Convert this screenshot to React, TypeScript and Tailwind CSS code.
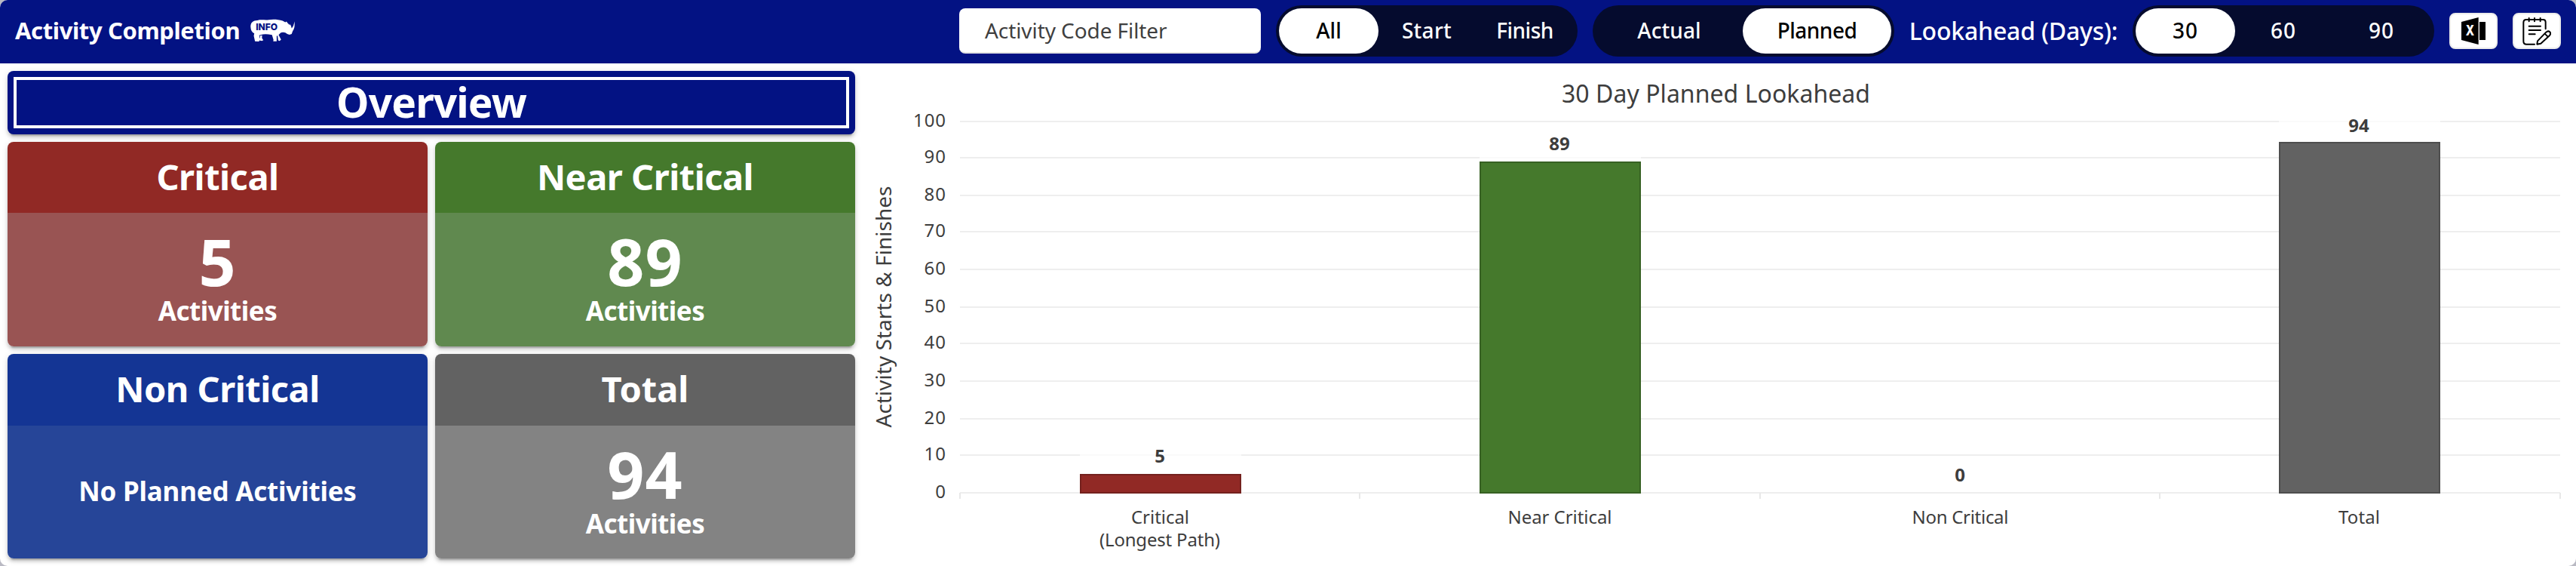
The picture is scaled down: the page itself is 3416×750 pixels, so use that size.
import type { ReactNode } from "react";

const SHADOW =
  "shadow-[0_6px_2px_-4px_rgba(0,0,0,0.2),0_4px_4px_0_rgba(0,0,0,0.14),0_2px_10px_0_rgba(0,0,0,0.12)]";

function RhinoInfo() {
  return (
    <svg viewBox="60 47 183 95" className="ml-[13px] h-[31px] w-[61px] shrink-0">
      <path
        fill="#fff"
        d="M62 79 C62 62 72 53 90 53 C104 49 120 53 136 51 C152 48 174 49 192 55 L203 61 L208 58 L213 65 L222 73 L221 67 Q228 75 229 85 Q238 76 240 57 Q244 82 233 97 L229 108 L220 111 L211 108 L203 103 Q192 100 184 104 L176 112 L186 131 L180 137 L174 134 L172 116 L168 116 L168 138 L154 138 L155 132 L149 112 Q124 107 112 110 L97 114 L99 124 L112 133 L108 137 L98 134 L96 139 L80 138 L75 116 L77 106 Q63 100 62 79 Z"
      />
      <path fill="#fff" d="M100 116 L109 114 L108 124 L114 134 L102 134 Z" />
      <text
        x="83"
        y="94"
        fontFamily="Inter, sans-serif"
        fontSize="38"
        fontWeight="800"
        fill="#031283"
        textLength="89"
        lengthAdjust="spacingAndGlyphs"
      >
        INFO
      </text>
    </svg>
  );
}

function ExcelIcon() {
  return (
    <svg viewBox="102 54 96 108" className="h-9 w-8">
      <path d="M102 72 L170 54 V162 L102 144 Z" fill="#000" />
      <path d="M174 72 H198 V144 H174 Z" fill="#000" />
      <text
        x="119"
        y="125"
        fontFamily="Inter, sans-serif"
        fontSize="56"
        fontWeight="800"
        fill="#fff"
        textLength="34"
        lengthAdjust="spacingAndGlyphs"
      >
        X
      </text>
    </svg>
  );
}

function NotesIcon() {
  return (
    <svg
      viewBox="354 53 114 111"
      className="h-[37px] w-[38px]"
      fill="none"
      stroke="#000"
      strokeWidth="6"
      strokeLinecap="round"
      strokeLinejoin="round"
    >
      <path d="M446 99 V72 Q446 62 436 62 H369 Q358 62 358 74 V148 Q358 160 370 160 H402" />
      <path d="M380 56 V69 M402 56 V69 M425 56 V69" />
      <path d="M380 88 H426 M380 104 H426 M380 120 H404" />
      <path d="M412 160 L414 147 L448 112 Q456 105 463 111 Q468 117 462 125 L427 157 Z M443 118 L455 130" />
    </svg>
  );
}

function Segment({ children, active, className }: { children: ReactNode; active?: boolean; className: string }) {
  return (
    <div
      className={`flex h-[60px] items-center justify-center rounded-[30px] pb-0.5 text-[28px] font-medium ${
        active ? "bg-white text-black" : "text-white"
      } ${className}`}
    >
      {children}
    </div>
  );
}

function SegmentGroup({ children }: { children: ReactNode }) {
  return <div className="flex h-[68px] w-[400px] rounded-[34px] bg-[#050b2e] p-1">{children}</div>;
}

function IconButton({ children }: { children: ReactNode }) {
  return (
    <button className="flex h-12 w-16 items-center justify-center rounded-lg border-2 border-[#ebebeb] bg-white">
      {children}
    </button>
  );
}

function Header() {
  return (
    <header className="flex h-[84px] items-start justify-between bg-[#031283] pr-5 pl-5">
      <div className="flex h-[81px] items-center">
        <h1 className="w-[298px] text-[31px] font-bold tracking-[-0.38px] whitespace-nowrap text-white">
          Activity Completion
        </h1>
        <RhinoInfo />
      </div>
      <div className="flex h-[82px] items-center">
        <div className="mr-5 flex h-[60px] w-[400px] items-center rounded-lg border-b-2 border-[#e4e4e4] bg-white pl-[34px] text-[28px] tracking-[-0.08px] text-[#3f3f3f]">
          Activity Code Filter
        </div>
        <SegmentGroup>
          <Segment active className="w-[132px]">All</Segment>
          <Segment className="w-32 tracking-[0.3px]">Start</Segment>
          <Segment className="w-[132px] tracking-[-0.5px]">Finish</Segment>
        </SegmentGroup>
        <div className="w-5" />
        <SegmentGroup>
          <Segment className="w-[195px] tracking-[0.1px]">Actual</Segment>
          <Segment active className="w-[197px] tracking-[-0.5px]">Planned</Segment>
        </SegmentGroup>
        <div className="w-[316px] text-center text-[32px] font-medium tracking-[-0.2px] text-white">
          Lookahead (Days):
        </div>
        <SegmentGroup>
          <Segment active className="w-[132px] tracking-[1px]">30</Segment>
          <Segment className="w-32 tracking-[1px]">60</Segment>
          <Segment className="w-[132px] tracking-[1px]">90</Segment>
        </SegmentGroup>
        <div className="ml-5 flex gap-5">
          <IconButton>
            <ExcelIcon />
          </IconButton>
          <IconButton>
            <NotesIcon />
          </IconButton>
        </div>
      </div>
    </header>
  );
}

interface CardProps {
  title: string;
  titleClass: string;
  bodyClass: string;
  value?: string;
}

function Card({ title, titleClass, bodyClass, value }: CardProps) {
  return (
    <section className={`flex h-[271px] flex-col overflow-hidden rounded-lg text-white ${SHADOW}`}>
      <h3 className={`flex shrink-0 items-center justify-center pb-0.5 text-[47px] font-bold ${titleClass}`}>
        {title}
      </h3>
      {value ? (
        <div className={`flex-1 pt-[21px] text-center font-bold ${bodyClass}`}>
          <div className="text-[86px] leading-[86px] tracking-[1px]">{value}</div>
          <div className="text-[35px] leading-[45px] tracking-[-0.5px]">Activities</div>
        </div>
      ) : (
        <div
          className={`flex flex-1 items-center justify-center pb-0.5 text-[35px] font-bold tracking-[-0.2px] ${bodyClass}`}
        >
          No Planned Activities
        </div>
      )}
    </section>
  );
}

function Overview() {
  return (
    <div className="w-[1124px]">
      <div className={`h-[84px] rounded-lg bg-[#031283] p-2 ${SHADOW}`}>
        <h2 className="flex h-[68px] items-center justify-center border-4 border-white pb-0.5 text-[55px] font-bold tracking-[-0.9px] text-white">
          Overview
        </h2>
      </div>
      <div className="mt-2.5 grid grid-cols-2 gap-2.5">
        <Card title="Critical" value="5" titleClass="h-[94px] bg-[#912925] tracking-[-0.5px]" bodyClass="bg-[#995453]" />
        <Card title="Near Critical" value="89" titleClass="h-[94px] bg-[#45792c] tracking-[-0.5px]" bodyClass="bg-[#60894f]" />
        <Card title="Non Critical" titleClass="h-[95px] bg-[#143594] tracking-[-0.5px]" bodyClass="bg-[#264598]" />
        <Card title="Total" value="94" titleClass="h-[95px] bg-[#626262]" bodyClass="bg-[#838383]" />
      </div>
    </div>
  );
}

const TICKS: [number, number][] = [
  [100, 161], [90, 209], [80, 259], [70, 307], [60, 357], [50, 407],
  [40, 455], [30, 505], [20, 555], [10, 603], [0, 653],
];

const BARS = [
  { x: 1539, top: 628, fill: "#912925", stroke: "#74211e", value: "5", labelY: 612.5, label: "Critical", width: 76 },
  { x: 2069, top: 214, fill: "#45792c", stroke: "#376123", value: "89", labelY: 198.5, label: "Near Critical", width: 137 },
  { x: 2600, top: 653, fill: "none", stroke: "none", value: "0", labelY: 637.5, label: "Non Critical", width: 127 },
  { x: 3129, top: 188, fill: "#626262", stroke: "#4e4e4e", value: "94", labelY: 174.5, label: "Total", width: 54 },
];

function Chart() {
  return (
    <svg
      viewBox="1144 84 2272 666"
      className="h-[666px] w-[2272px]"
      fontFamily="'Noto Sans', sans-serif"
      fill="#3d3d3d"
    >
      <text x="2071" y="135.5" fontSize="32" textLength="409">30 Day Planned Lookahead</text>
      <text transform="translate(1182 566.5) rotate(-90)" fontSize="28" textLength="320">
        Activity Starts &amp; Finishes
      </text>
      {TICKS.map(([value, y]) => (
        <g key={value}>
          <rect x="1273" y={y - 1} width="2122" height="2" fill="#eeeeee" />
          <text
            x="1254"
            y={y + 7}
            fontSize="24"
            textAnchor="end"
            textLength={value === 100 ? 43 : value === 0 ? 14 : 28.5}
          >
            {value}
          </text>
        </g>
      ))}
      {[1273, 1803, 2334, 2864, 3395].map((x) => (
        <rect key={x} x={x - 1} y="653" width="2" height="8" fill="#e8e8e8" />
      ))}
      {BARS.map((b) => (
        <g key={b.label}>
          {b.fill !== "none" && (
            <>
              <rect x={b.x - 107} y={b.top - 32} width="214" height="32" fill="#fff" fillOpacity="0.7" />
              <rect
                x={b.x - 106}
                y={b.top + 1}
                width="212"
                height={652 - b.top}
                fill={b.fill}
                stroke={b.stroke}
                strokeWidth="2"
              />
            </>
          )}
          <text x={b.x - 1} y={b.labelY} fontSize="24" fontWeight="700" textAnchor="middle">
            {b.value}
          </text>
          <text x={b.x - 0.5} y="694" fontSize="24" textAnchor="middle" textLength={b.width + 1}>
            {b.label}
          </text>
        </g>
      ))}
      <text x="1538" y="724" fontSize="24" textAnchor="middle" textLength="160">(Longest Path)</text>
    </svg>
  );
}

export default function App() {
  return (
    <div className="h-[750px] w-[3416px] bg-[#b9b9c3] font-['Noto_Sans',sans-serif]">
      <div className="h-full overflow-hidden rounded-[10px] bg-white">
        <Header />
        <main className="flex">
          <div className="pt-2.5 pr-2.5 pl-2.5">
            <Overview />
          </div>
          <Chart />
        </main>
      </div>
    </div>
  );
}
